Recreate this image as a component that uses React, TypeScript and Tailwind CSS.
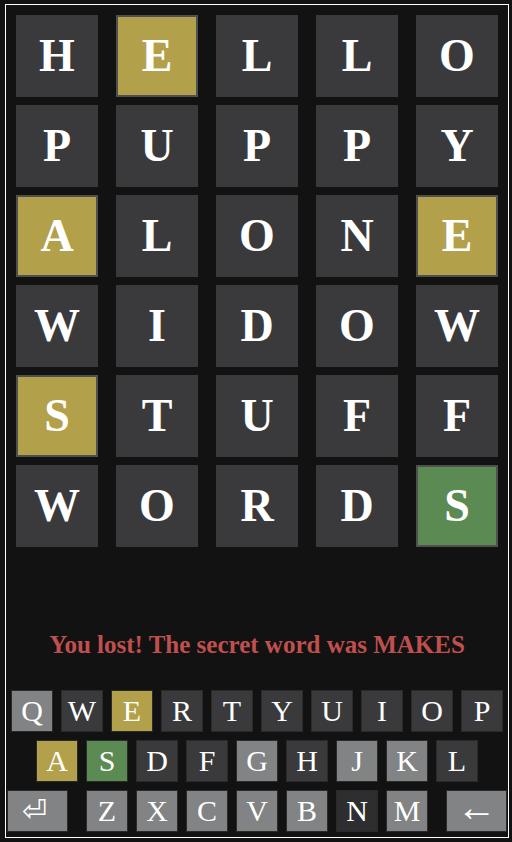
import React from 'react';

type Mark = 'n' | 'y' | 'g';

const guesses: { word: string; marks: Mark[] }[] = [
  { word: 'HELLO', marks: ['n', 'y', 'n', 'n', 'n'] },
  { word: 'PUPPY', marks: ['n', 'n', 'n', 'n', 'n'] },
  { word: 'ALONE', marks: ['y', 'n', 'n', 'n', 'y'] },
  { word: 'WIDOW', marks: ['n', 'n', 'n', 'n', 'n'] },
  { word: 'STUFF', marks: ['y', 'n', 'n', 'n', 'n'] },
  { word: 'WORDS', marks: ['n', 'n', 'n', 'n', 'g'] },
];

const tileColor: Record<Mark, string> = {
  n: 'bg-[#3a3a3c] border-[#3a3a3c]',
  y: 'bg-[#b3a04a] border-[#4f4f4f]',
  g: 'bg-[#5c8a53] border-[#4f4f4f]',
};

// u = unused, a = absent, y = present, g = correct
type KeyState = 'u' | 'a' | 'y' | 'g' | 'x';

const keyColor: Record<KeyState, string> = {
  u: 'bg-[#818384]',
  a: 'bg-[#3a3a3c]',
  y: 'bg-[#b3a04a]',
  g: 'bg-[#5c8a53]',
  x: 'bg-[#2e2e30]',
};

const row1: [string, KeyState][] = [
  ['Q', 'u'], ['W', 'a'], ['E', 'y'], ['R', 'a'], ['T', 'a'],
  ['Y', 'a'], ['U', 'a'], ['I', 'a'], ['O', 'a'], ['P', 'a'],
];
const row2: [string, KeyState][] = [
  ['A', 'y'], ['S', 'g'], ['D', 'a'], ['F', 'a'], ['G', 'u'],
  ['H', 'a'], ['J', 'u'], ['K', 'u'], ['L', 'a'],
];
const row3: [string, KeyState][] = [
  ['Z', 'u'], ['X', 'u'], ['C', 'u'], ['V', 'u'], ['B', 'u'], ['N', 'x'], ['M', 'u'],
];

function Key({ label, state }: { label: string; state: KeyState }) {
  return (
    <div
      className={`${keyColor[state]} w-[42px] h-[42px] border border-[#2a2a2a] flex items-center justify-center text-[30px] leading-none text-white`}
    >
      {label}
    </div>
  );
}

export default function App() {
  return (
    <div className="w-[512px] h-[842px] bg-[#121212] pt-[4px] pl-[5px] pr-[3px] font-['Liberation_Serif','Times_New_Roman',serif]">
      <div className="h-[834px] border border-white flex flex-col bg-[#121212]">
        {/* board */}
        <div className="pt-[10px] pl-[10px] grid grid-cols-[repeat(5,82px)] gap-x-[18px] gap-y-[8px]">
          {guesses.map((g, r) =>
            g.word.split('').map((ch, i) => (
              <div
                key={`${r}-${i}`}
                className={`${tileColor[g.marks[i]]} h-[82px] border-2 flex items-center justify-center text-[46px] font-bold text-white leading-none`}
              >
                {ch}
              </div>
            ))
          )}
        </div>

        {/* message */}
        <div className="mt-[83px] h-[28px] flex items-center justify-center text-[25px] font-bold text-[#c0504d] leading-none">
          You lost! The secret word was MAKES
        </div>

        {/* keyboard */}
        <div className="mt-[32px] flex flex-col gap-[8px]">
          <div className="flex justify-center gap-[8px]">
            {row1.map(([l, s]) => (
              <Key key={l} label={l} state={s} />
            ))}
          </div>
          <div className="flex justify-center gap-[8px]">
            {row2.map(([l, s]) => (
              <Key key={l} label={l} state={s} />
            ))}
          </div>
          <div className="flex justify-between px-[1px]">
            <div className="w-[61px] h-[42px] border border-[#2a2a2a] bg-[#818384] flex items-center justify-center pr-[6px] text-[30px] text-white leading-none font-['DejaVu_Sans',sans-serif]">
              ⏎
            </div>
            <div className="flex gap-[8px]">
              {row3.map(([l, s]) => (
                <Key key={l} label={l} state={s} />
              ))}
            </div>
            <div className="w-[61px] h-[42px] border border-[#2a2a2a] bg-[#818384] flex items-center justify-center pb-[6px] text-[40px] text-white leading-none">
              ←
            </div>
          </div>
        </div>
      </div>
    </div>
  );
}
